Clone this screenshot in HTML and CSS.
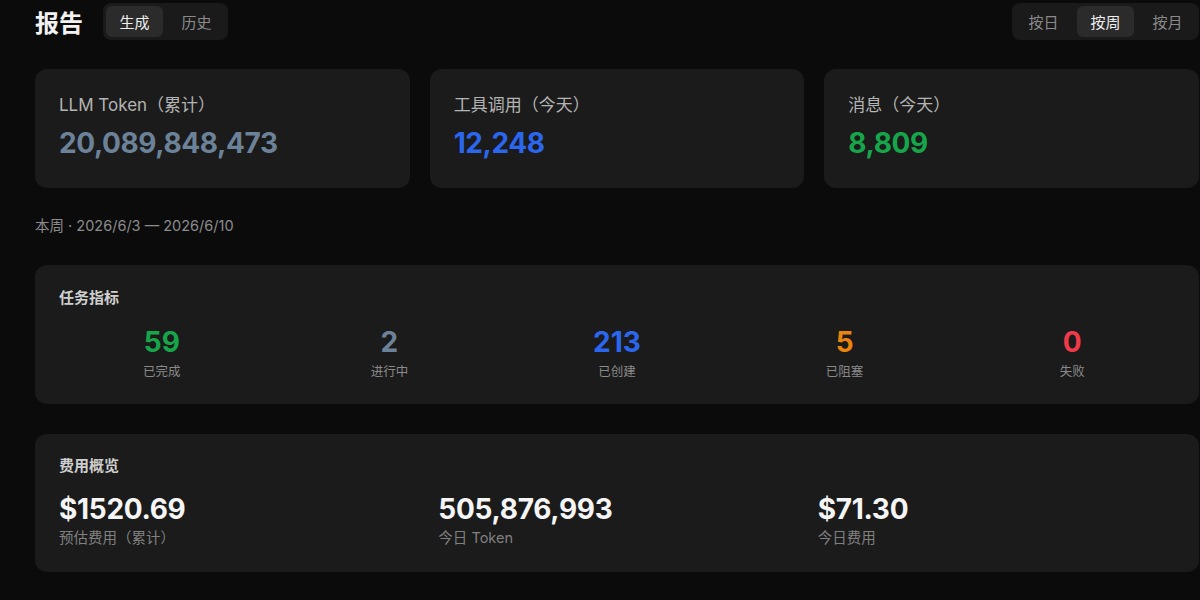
FILE: index.html
```html
<!DOCTYPE html>
<html lang="zh-CN">
<head>
  <meta charset="UTF-8">
  <meta name="viewport" content="width=device-width, initial-scale=1.0">
  <title>报告</title>
  <link rel="stylesheet" href="styles.css">
</head>
<body>
  <div class="page">
    <header class="topbar">
      <div class="topbar-left">
        <h1>报告</h1>
        <div class="segmented">
          <button class="seg active">生成</button>
          <button class="seg">历史</button>
        </div>
      </div>
      <div class="segmented">
        <button class="seg">按日</button>
        <button class="seg active">按周</button>
        <button class="seg">按月</button>
      </div>
    </header>

    <section class="summary">
      <div class="card stat-card">
        <div class="stat-label">LLM Token（累计）</div>
        <div class="stat-value slate">20,089,848,473</div>
      </div>
      <div class="card stat-card">
        <div class="stat-label">工具调用（今天）</div>
        <div class="stat-value blue">12,248</div>
      </div>
      <div class="card stat-card">
        <div class="stat-label">消息（今天）</div>
        <div class="stat-value green">8,809</div>
      </div>
    </section>

    <p class="period">本周 · 2026/6/3 — 2026/6/10</p>

    <section class="card panel">
      <h2>任务指标</h2>
      <div class="task-grid">
        <div class="task">
          <div class="task-num green">59</div>
          <div class="task-label">已完成</div>
        </div>
        <div class="task">
          <div class="task-num slate">2</div>
          <div class="task-label">进行中</div>
        </div>
        <div class="task">
          <div class="task-num blue">213</div>
          <div class="task-label">已创建</div>
        </div>
        <div class="task">
          <div class="task-num orange">5</div>
          <div class="task-label">已阻塞</div>
        </div>
        <div class="task">
          <div class="task-num red">0</div>
          <div class="task-label">失败</div>
        </div>
      </div>
    </section>

    <section class="card panel cost">
      <h2>费用概览</h2>
      <div class="cost-grid">
        <div>
          <div class="cost-num">$1520.69</div>
          <div class="cost-label">预估费用（累计）</div>
        </div>
        <div>
          <div class="cost-num">505,876,993</div>
          <div class="cost-label">今日 Token</div>
        </div>
        <div>
          <div class="cost-num">$71.30</div>
          <div class="cost-label">今日费用</div>
        </div>
      </div>
    </section>
  </div>
</body>
</html>
```

FILE: styles.css
```css
html, body {
    margin: 0;
    padding: 0;
    background: #0b0b0b;
    overflow: hidden;
}
body {
    font-family: Inter, "Noto Sans CJK SC", sans-serif;
    color: #eaeaea;
}
.page {
    padding: 3px 1px 0 35px;
}
.topbar {
    display: flex;
    justify-content: space-between;
    align-items: center;
}
.topbar-left {
    display: flex;
    align-items: center;
    gap: 20px;
}
h1 {
    margin: 0;
    font-size: 24px;
    font-weight: 700;
    color: #f2f2f2;
}
.segmented {
    display: flex;
    gap: 5px;
    padding: 3px;
    background: #1a1a1a;
    border-radius: 8px;
}
.seg {
    width: 57px;
    height: 31px;
    border: none;
    border-radius: 6px;
    background: transparent;
    color: #8a8a8a;
    font-family: inherit;
    font-size: 15px;
    padding: 0;
}
.seg.active {
    background: #2b2b2b;
    color: #eeeeee;
}
.card {
    background: #1b1b1b;
    border-radius: 12px;
}
.summary {
    display: grid;
    grid-template-columns: repeat(3, 1fr);
    gap: 20px;
    margin-top: 29px;
}
.stat-card {
    padding: 24px 24px 27px;
}
.stat-label {
    font-size: 17px;
    line-height: 24px;
    color: #b4b4b4;
}
.stat-value {
    margin-top: 8px;
    font-size: 28px;
    line-height: 36px;
    font-weight: 700;
    letter-spacing: -0.4px;
}
.slate { color: #6c8299; }
.blue { color: #2b67ee; }
.green { color: #17a54a; }
.orange { color: #ea840f; }
.red { color: #f03a4a; }
.period {
    margin: 28px 0 29px;
    font-size: 14.5px;
    line-height: 20px;
    color: #8c8c8c;
}
.panel {
    padding: 23px 24px;
}
.panel h2 {
    margin: 0;
    font-size: 15px;
    line-height: 20px;
    font-weight: 700;
    color: #cfcfcf;
}
.task-grid {
    display: grid;
    grid-template-columns: repeat(5, 1fr);
    gap: 22px;
    margin-top: 16px;
    text-align: center;
}
.task-num {
    font-size: 28px;
    line-height: 36px;
    font-weight: 700;
}
.task-label {
    margin-top: 3px;
    font-size: 12.5px;
    line-height: 18px;
    color: #8a8a8a;
}
.cost {
    margin-top: 30px;
    padding: 22px 24px 24px;
}
.cost-grid {
    display: grid;
    grid-template-columns: repeat(3, 1fr);
    gap: 22px;
    margin-top: 15px;
}
.cost-num {
    font-size: 28px;
    line-height: 36px;
    font-weight: 700;
    color: #f5f5f5;
    letter-spacing: -0.3px;
}
.cost-label {
    margin-top: 1px;
    font-size: 14.5px;
    line-height: 20px;
    color: #808080;
}
```
